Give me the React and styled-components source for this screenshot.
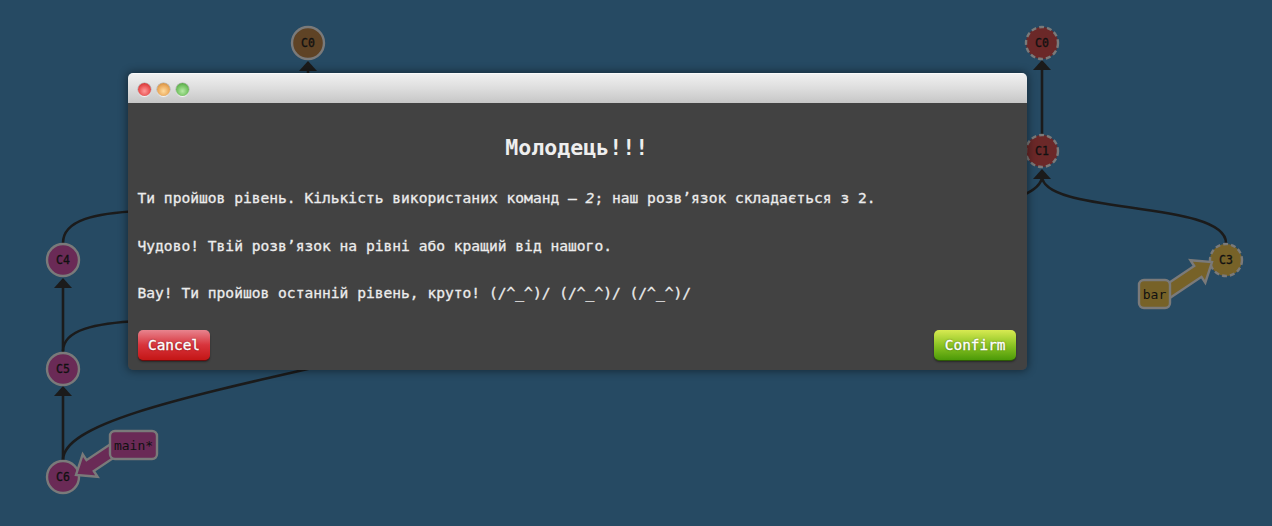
import React from "react";
import styled, { createGlobalStyle } from "styled-components";

const GlobalStyle = createGlobalStyle`
  html, body { margin: 0; padding: 0; background: #264a63; }
  body { font-family: "DejaVu Sans Mono", "Liberation Mono", monospace; }
`;

const Stage = styled.div`
  position: relative;
  width: 1272px;
  height: 526px;
  overflow: hidden;
  background: #264a63;
`;

const GraphCanvas = styled.svg`
  position: absolute;
  inset: 0;
  width: 1272px;
  height: 526px;
`;

const Overlay = styled.div`
  position: absolute;
  inset: 0;
  display: flex;
  align-items: flex-start;
  padding: 73px 0 0 127.5px;
`;

const Modal = styled.div`
  width: 899.5px;
  border-radius: 5px;
  overflow: hidden;
  box-shadow: 0 0 9px 1px rgba(0, 0, 0, 0.45);
`;

const TitleBar = styled.div`
  height: 30px;
  box-sizing: border-box;
  display: flex;
  align-items: center;
  gap: 6px;
  padding: 2px 0 0 10px;
  background: linear-gradient(to bottom, #f0f0f0 0%, #dddddd 50%, #c6c6c6 100%);
  border-top: 1px solid #fafafa;
`;

const lightColors = {
  red: ["#ff9a9a", "#e85050", "#b82020"],
  yellow: ["#ffdca0", "#eaa85a", "#b87a30"],
  green: ["#b6eaa6", "#72c160", "#3f8a30"],
};

const Light = styled.span`
  width: 13px;
  height: 13px;
  border-radius: 50%;
  background: radial-gradient(
    circle at 50% 62%,
    ${(p) => lightColors[p.$tone][0]} 0%,
    ${(p) => lightColors[p.$tone][1]} 55%,
    ${(p) => lightColors[p.$tone][2]} 100%
  );
  box-shadow: 0 1px 1px rgba(255, 255, 255, 0.95), 0 0 0 0.5px rgba(0, 0, 0, 0.25);
`;

const Body = styled.div`
  background: #424242;
  padding: 30px 11px 10px 10px;
  color: #ececec;
`;

const Heading = styled.h2`
  margin: 0;
  height: 30px;
  line-height: 30px;
  text-align: center;
  font-size: 21.6px;
  font-weight: bold;
  color: #eeeeee;
`;

const Para = styled.p`
  margin: 0;
  margin-top: ${(p) => (p.$first ? "25px" : "27.5px")};
  font-size: 14.6px;
  line-height: 20px;
  white-space: nowrap;
  -webkit-text-stroke: 0.3px #ececec;

  em {
    font-style: italic;
  }
`;

const ButtonRow = styled.div`
  margin-top: 27px;
  display: flex;
  justify-content: space-between;
`;

const variants = {
  cancel: ["#e8848e", "#d8343c", "#c41616", "#6a0c0c"],
  confirm: ["#d8ea52", "#8cc424", "#4c9a08", "#2c5a04"],
};

const Button = styled.button`
  height: 30px;
  padding: 0 10.5px;
  border: none;
  border-radius: 5px;
  font-family: "DejaVu Sans Mono", monospace;
  font-size: 14.4px;
  color: #ffffff;
  -webkit-text-stroke: 0.35px #ffffff;
  text-shadow: 0 0 2px rgba(0, 0, 0, 0.6);
  background: linear-gradient(
    to bottom,
    ${(p) => variants[p.$variant][0]} 0%,
    ${(p) => variants[p.$variant][1]} 50%,
    ${(p) => variants[p.$variant][2]} 100%
  );
  box-shadow: 0 1px 0 ${(p) => variants[p.$variant][3]}, 0 2px 2px rgba(0, 0, 0, 0.4);
  cursor: pointer;
`;

const EDGE = "#1b1b1b";
const NODE_STROKE = "#7a7a7a";

const colors = {
  purple: "#6a2a56",
  brown: "#5f4325",
  red: "#6b2828",
  olive: "#776228",
};

function Commit({ x, y, id, fill, dashed }) {
  return (
    <g>
      <circle
        cx={x}
        cy={y}
        r={16}
        fill={fill}
        stroke={NODE_STROKE}
        strokeWidth={2.4}
        strokeDasharray={dashed ? "5 3" : undefined}
      />
      <text
        x={x}
        y={y + 4.2}
        textAnchor="middle"
        fontFamily="DejaVu Sans Mono, monospace"
        fontSize="11.5"
        fill="#111"
        stroke="#111"
        strokeWidth="0.3"
      >
        {id}
      </text>
    </g>
  );
}

function ArrowHead({ x, y }) {
  return <polygon points={`${x - 9},${y + 10} ${x},${y} ${x + 9},${y + 10}`} fill={EDGE} />;
}

function branchArrow(tx, ty, px, py) {
  const dx = px - tx;
  const dy = py - ty;
  const len = Math.hypot(dx, dy);
  const ux = dx / len;
  const uy = dy / len;
  const nx = -uy;
  const ny = ux;
  const hl = 17;
  const hw = 13.5;
  const sw = 6.5;
  const bx = px - hl * ux;
  const by = py - hl * uy;
  const pts = [
    [tx + sw * nx, ty + sw * ny],
    [bx + sw * nx, by + sw * ny],
    [bx + hw * nx, by + hw * ny],
    [px, py],
    [bx - hw * nx, by - hw * ny],
    [bx - sw * nx, by - sw * ny],
    [tx - sw * nx, ty - sw * ny],
  ];
  return pts.map((p) => p.map((v) => v.toFixed(1)).join(",")).join(" ");
}

function Branch({ x, y, w, label, fill, tail, tip }) {
  return (
    <g>
      <polygon
        points={branchArrow(tail[0], tail[1], tip[0], tip[1])}
        fill={fill}
        stroke={NODE_STROKE}
        strokeWidth={2.4}
        strokeLinejoin="miter"
      />
      <rect x={x} y={y} width={w} height={28} rx={5} fill={fill} stroke={NODE_STROKE} strokeWidth={2.4} />
      <text
        x={x + w / 2}
        y={y + 18.5}
        textAnchor="middle"
        fontFamily="DejaVu Sans Mono, monospace"
        fontSize="13"
        fill="#111"
      >
        {label}
      </text>
    </g>
  );
}

function Graph() {
  return (
    <GraphCanvas viewBox="0 0 1272 526">
      <g fill="none" stroke={EDGE} strokeWidth={2.6}>
        <path d="M308,120 L308,68" />
        <path d="M1042,134 L1042,68" />
        <path d="M1226,243 C1226,200 1042,215 1042,176" />
        <path d="M960,215 C1015,200 1042,192 1042,176" />
        <path d="M63,243 C63,220 95,213 140,211" />
        <path d="M63,351 C63,330 95,323 140,321" />
        <path d="M63,460 C63,425 170,400 330,364" />
        <path d="M63,352 L63,286" />
        <path d="M63,460 L63,394" />
      </g>
      <ArrowHead x={308} y={61} />
      <ArrowHead x={1042} y={60} />
      <ArrowHead x={1042} y={169} />
      <ArrowHead x={63} y={278} />
      <ArrowHead x={63} y={386} />

      <Commit x={308} y={43} id="C0" fill={colors.brown} />
      <Commit x={1042} y={43} id="C0" fill={colors.red} dashed />
      <Commit x={1042} y={151} id="C1" fill={colors.red} dashed />
      <Commit x={1226} y={260} id="C3" fill={colors.olive} dashed />
      <Commit x={63} y={260} id="C4" fill={colors.purple} />
      <Commit x={63} y={369} id="C5" fill={colors.purple} />
      <Commit x={63} y={477} id="C6" fill={colors.purple} />

      <Branch
        x={1139}
        y={280}
        w={31}
        label="bar"
        fill={colors.olive}
        tail={[1164, 294]}
        tip={[1212, 262]}
      />
      <Branch
        x={110}
        y={431}
        w={47}
        label="main*"
        fill={colors.purple}
        tail={[118, 447]}
        tip={[76, 475]}
      />
    </GraphCanvas>
  );
}

export default function App() {
  return (
    <>
      <GlobalStyle />
      <Stage>
        <Graph />
        <Overlay>
          <Modal>
            <TitleBar>
              <Light $tone="red" />
              <Light $tone="yellow" />
              <Light $tone="green" />
            </TitleBar>
            <Body>
              <Heading>Молодець!!!</Heading>
              <Para $first>
                Ти пройшов рівень. Кількість використаних команд — <em>2</em>; наш розв’язок складається з 2.
              </Para>
              <Para>Чудово! Твій розв’язок на рівні або кращий від нашого.</Para>
              <Para>Вау! Ти пройшов останній рівень, круто! (/^_^)/ (/^_^)/ (/^_^)/</Para>
              <ButtonRow>
                <Button $variant="cancel">Cancel</Button>
                <Button $variant="confirm">Confirm</Button>
              </ButtonRow>
            </Body>
          </Modal>
        </Overlay>
      </Stage>
    </>
  );
}
